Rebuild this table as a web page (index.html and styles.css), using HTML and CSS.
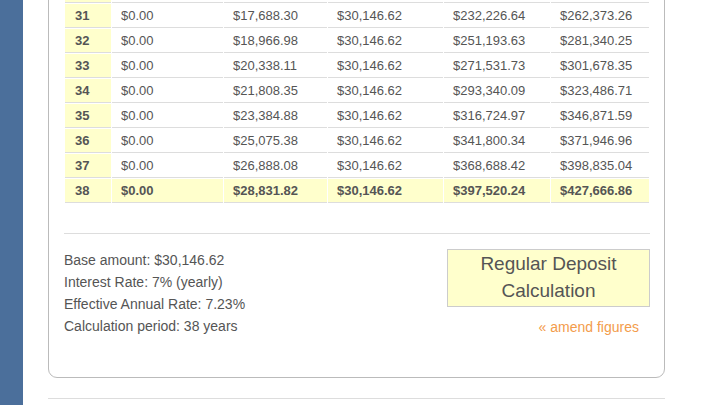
FILE: index.html
```html
<!DOCTYPE html>
<html>
<head>
<meta charset="utf-8">
<link rel="stylesheet" href="styles.css">
</head>
<body>
<div class="layout">
  <aside class="sidebar"></aside>
  <main class="main">
    <section class="card">
      <table class="schedule">
        <colgroup>
          <col class="c1"><col class="c2"><col class="c3"><col class="c4"><col class="c5"><col class="c6">
        </colgroup>
        <tbody>
          <tr class="prev"><td class="yr"></td><td></td><td></td><td></td><td></td><td></td></tr>
          <tr><td class="yr">31</td><td>$0.00</td><td>$17,688.30</td><td>$30,146.62</td><td>$232,226.64</td><td>$262,373.26</td></tr>
          <tr><td class="yr">32</td><td>$0.00</td><td>$18,966.98</td><td>$30,146.62</td><td>$251,193.63</td><td>$281,340.25</td></tr>
          <tr><td class="yr">33</td><td>$0.00</td><td>$20,338.11</td><td>$30,146.62</td><td>$271,531.73</td><td>$301,678.35</td></tr>
          <tr><td class="yr">34</td><td>$0.00</td><td>$21,808.35</td><td>$30,146.62</td><td>$293,340.09</td><td>$323,486.71</td></tr>
          <tr><td class="yr">35</td><td>$0.00</td><td>$23,384.88</td><td>$30,146.62</td><td>$316,724.97</td><td>$346,871.59</td></tr>
          <tr><td class="yr">36</td><td>$0.00</td><td>$25,075.38</td><td>$30,146.62</td><td>$341,800.34</td><td>$371,946.96</td></tr>
          <tr><td class="yr">37</td><td>$0.00</td><td>$26,888.08</td><td>$30,146.62</td><td>$368,688.42</td><td>$398,835.04</td></tr>
          <tr class="total"><td class="yr">38</td><td>$0.00</td><td>$28,831.82</td><td>$30,146.62</td><td>$397,520.24</td><td>$427,666.86</td></tr>
        </tbody>
      </table>
      <hr class="sep">
      <div class="summary">
        <div class="facts">
          <div>Base amount: $30,146.62</div>
          <div>Interest Rate: 7% (yearly)</div>
          <div>Effective Annual Rate: 7.23%</div>
          <div>Calculation period: 38 years</div>
        </div>
        <div class="side">
          <div class="title">Regular Deposit<br>Calculation</div>
          <a class="amend" href="#">« amend figures</a>
        </div>
      </div>
    </section>
    <hr class="foot">
  </main>
</div>
</body>
</html>
```

FILE: styles.css
```css
* { box-sizing: border-box; }
html, body {
  margin: 0;
  padding: 0;
  background: #fff;
  overflow: hidden;
}
body {
  font-family: "Liberation Sans", Arial, sans-serif;
  color: #555;
  height: 405px;
}
.layout {
  display: flex;
  height: 405px;
}
.sidebar {
  width: 23px;
  flex: none;
  background: #4b6f9b;
}
.main {
  padding-left: 25px;
  width: 666px;
}
.card {
  width: 617px;
  margin-top: -23px;
  border: 1px solid #bbb;
  border-radius: 0 0 9px 9px;
  padding: 0 14px 39px 15px;
}
.schedule {
  width: 586px;
  border-collapse: separate;
  border-spacing: 1px;
  font-size: 13px;
  table-layout: fixed;
}
.c1 { width: 46px; }
.c2 { width: 111px; }
.c3 { width: 103px; }
.c4 { width: 115px; }
.c5 { width: 106px; }
.c6 { width: 98px; }
.schedule td {
  height: 24px;
  padding: 0 0 0 9px;
  border-bottom: 1px solid #ddd;
  vertical-align: middle;
  line-height: 23px;
  white-space: nowrap;
}
.schedule td.yr {
  background: #ffffcc;
  font-weight: bold;
  padding-left: 10px;
}
.schedule tr.total td {
  background: #ffffcc;
  font-weight: bold;
}
.sep {
  border: 0;
  border-top: 1px solid #ddd;
  margin: 29px 0 15px;
  height: 0;
}
.summary {
  display: flex;
  justify-content: space-between;
  align-items: flex-start;
  font-size: 14px;
  line-height: 22px;
}
.side {
  width: 203px;
  display: flex;
  flex-direction: column;
  align-items: flex-end;
}
.title {
  width: 203px;
  background: #ffffcc;
  border: 1px solid #ccc;
  font-size: 19px;
  line-height: 27px;
  padding: 0 0 2px;
  text-align: center;
  color: #555;
}
.amend {
  margin-top: 9px;
  margin-right: 11px;
  color: #f39c4b;
  text-decoration: none;
}
.foot {
  border: 0;
  border-top: 1px solid #ddd;
  margin: 20px 0 0;
  width: 617px;
  height: 0;
}
```
